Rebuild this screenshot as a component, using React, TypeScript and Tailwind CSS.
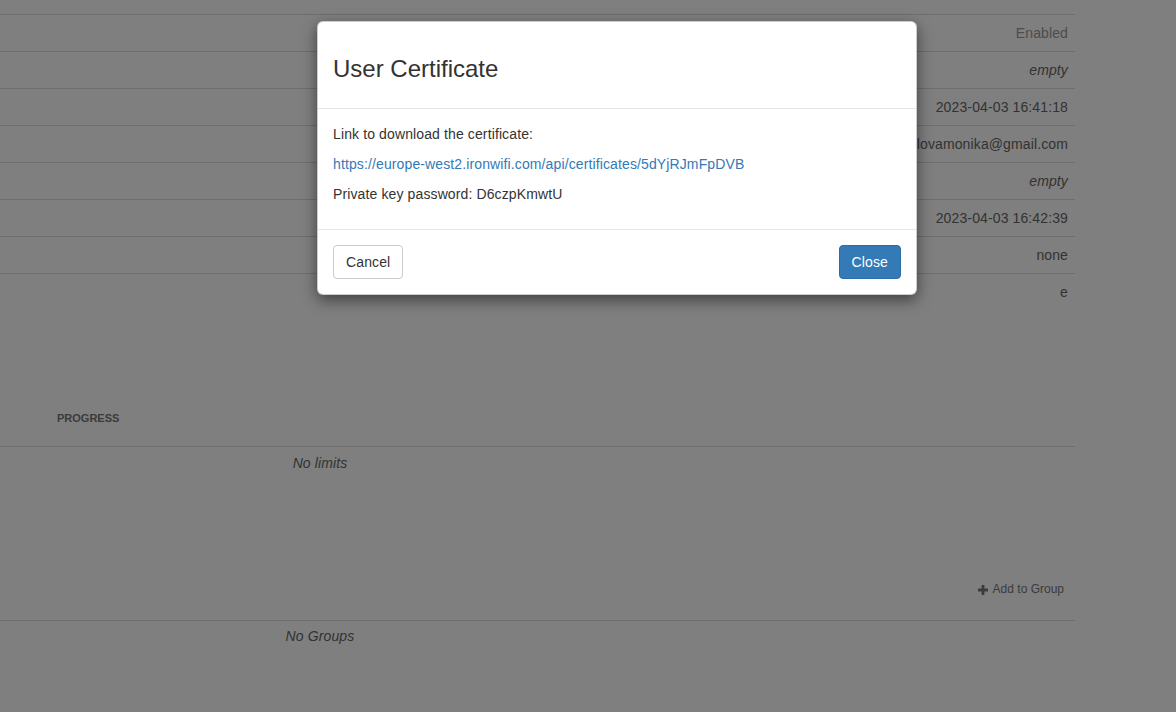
import React from "react";

const rows = [
  { value: "Enabled", cls: "text-[#999]" },
  { value: "empty", cls: "italic" },
  { value: "2023-04-03 16:41:18", cls: "" },
  { value: "kovalovamonika@gmail.com", cls: "" },
  { value: "empty", cls: "italic" },
  { value: "2023-04-03 16:42:39", cls: "" },
  { value: "none", cls: "" },
  { value: "e", cls: "" },
];

const font = { fontFamily: '"Liberation Sans", Arial, sans-serif' };

const App: React.FC = () => {
  return (
    <div className="relative h-[712px] w-[1176px] overflow-hidden bg-white text-[14px] leading-[20px] tracking-[0.12px] text-[#666]" style={font}>
      {/* page behind the dialog */}
      <div className="w-[1075px] pt-[14px]">
        <div>
          {rows.map((row, i) => (
            <div key={i} className="border-t border-[#ddd] py-2 pl-2 pr-[7px] text-right">
              <span className={row.cls}>{row.value}</span>
            </div>
          ))}
        </div>

        <div className="flex h-[137px] items-end border-b border-[#ddd] pb-[18px] pl-[57px]">
          <span className="text-[11px] font-bold uppercase leading-[20px] tracking-normal text-[#777]">Progress</span>
        </div>
        <div className="w-[640px] pt-[6px] text-center italic">No limits</div>

        <div className="flex justify-end pt-[108px] pr-[11px]">
          <span className="flex items-center gap-[5px] text-[12px] leading-[17px] tracking-normal text-[#777]">
            <svg width="10" height="10" viewBox="0 0 10 10" fill="currentColor">
              <path d="M3.6 0h2.8v3.6H10v2.8H6.4V10H3.6V6.4H0V3.6h3.6z" />
            </svg>
            Add to Group
          </span>
        </div>
        <div className="mt-[22px] border-t border-[#ddd]" />
        <div className="w-[640px] pt-[5px] text-center italic">No Groups</div>
      </div>

      {/* backdrop */}
      <div className="absolute inset-0 bg-black/50" />

      {/* dialog */}
      <div className="absolute left-[317px] top-[21px] w-[600px] rounded-[6px] border border-black/20 bg-white text-[#333] shadow-[0_5px_15px_rgba(0,0,0,0.5)]">
        <div className="border-b border-[#e5e5e5] px-[15px] py-[15px]">
          <h3 className="mt-[19px] mb-[11px] text-[24px] leading-[26.4px] font-normal tracking-normal">User Certificate</h3>
        </div>
        <div className="p-[15px]">
          <p className="mb-[10px]">Link to download the certificate:</p>
          <p className="mb-[10px]">
            <a className="text-[#337ab7]">https://europe-west2.ironwifi.com/api/certificates/5dYjRJmFpDVB</a>
          </p>
          <p className="mb-[10px]">Private key password: D6czpKmwtU</p>
        </div>
        <div className="flex items-center justify-between border-t border-[#e5e5e5] p-[15px]">
          <button className="h-[34px] rounded-[4px] border border-[#ccc] bg-white px-3 text-[14px] text-[#333]">Cancel</button>
          <button className="h-[34px] rounded-[4px] border border-[#2e6da4] bg-[#337ab7] px-3 text-[14px] text-white">Close</button>
        </div>
      </div>
    </div>
  );
};

export default App;
